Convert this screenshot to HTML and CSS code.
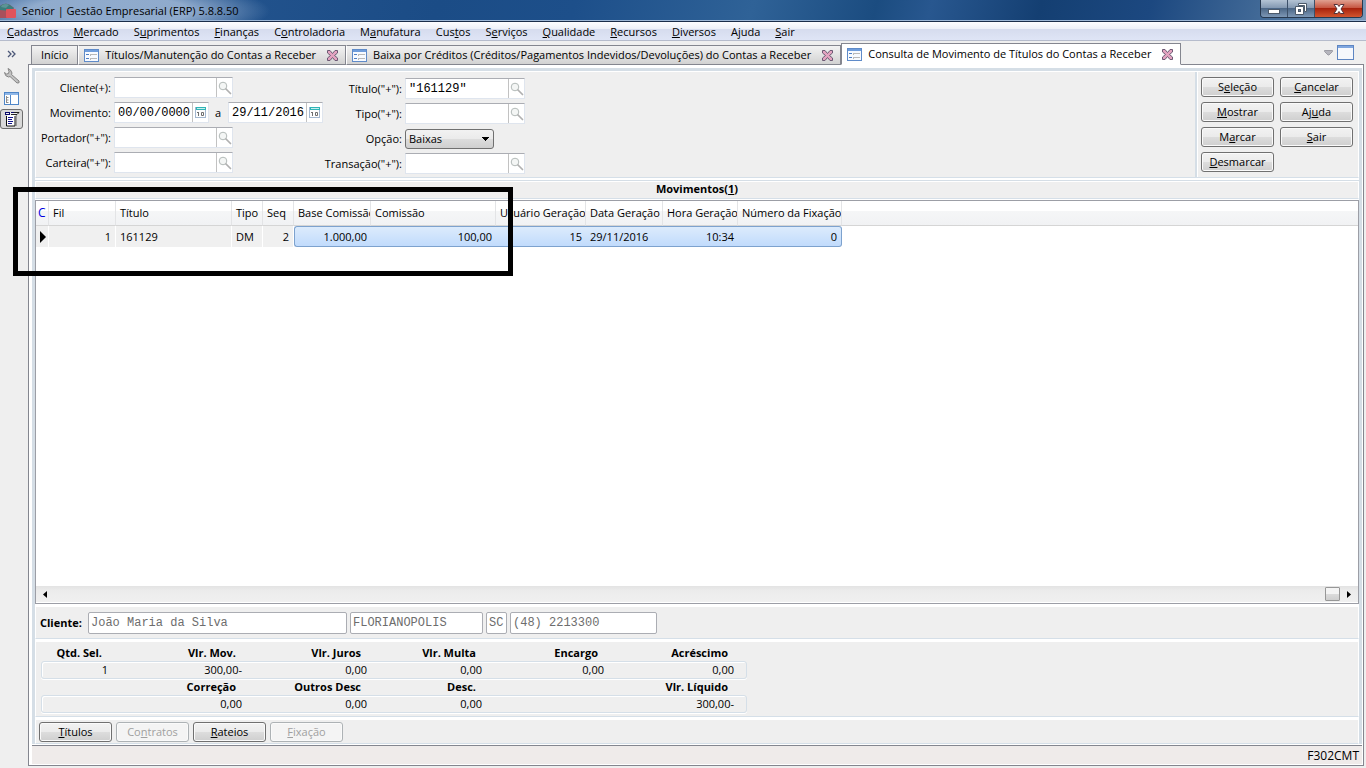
FILE: index.html
```
<!DOCTYPE html>
<html lang="pt-BR">
<head>
    <meta charset="UTF-8">
    <meta name="viewport" content="width=device-width, initial-scale=1.0">
    <title>Senior | Gestão Empresarial (ERP) 5.8.8.50</title>
    <link rel="stylesheet" href="styles.css">
</head>
<body>
    <!-- Ícones compartilhados -->
    <svg class="icon-defs" width="0" height="0" aria-hidden="true">
        <symbol id="icon-form" viewBox="0 0 15 13">
            <rect x="0.5" y="0.5" width="14" height="12" fill="#f7faff" stroke="#5f8bc9"/>
            <path d="M1 1h13v2H1z" fill="#6f9ddc"/>
            <path d="M2 5.500h3M2 9.500h3" stroke="#4f7fc4"/>
            <path d="M7 5.500h6M7 9.500h6M6.500 5v2M6.500 9v2" stroke="#b9b9b9"/>
        </symbol>
        <symbol id="icon-close" viewBox="0 0 11 11">
            <path d="M0.500 0.500h2.500l2.500 3 2.500-3h2.500v2.500l-3 2.500 3 2.500v2.500h-2.500l-2.500-3-2.500 3h-2.500v-2.500l3-2.500-3-2.500z" fill="#e3a3c0" stroke="#6d5a74"/>
        </symbol>
        <symbol id="icon-search" viewBox="0 0 14 14">
            <circle cx="5" cy="5" r="3.800" fill="#f4f6f5" stroke="#b3bab8"/>
            <path d="M8 8l4.500 4.500" stroke="#b0b0b0" stroke-width="1.700" stroke-linecap="round"/>
        </symbol>
        <symbol id="icon-calendar" viewBox="0 0 11 11">
            <rect x="0.5" y="0.5" width="10" height="10" fill="#fdfdfd" stroke="#a3b7cf"/>
            <path d="M1 0h10v3H1z" fill="#2fb4b6"/>
            <path d="M2 1h8v1H2z" fill="#c9f0ef"/>
            <path d="M3.500 5v4M2 5.500h1M6.500 5.500h2v3h-2z" fill="none" stroke="#6f6f6f"/>
        </symbol>
    </svg>

    <!-- Barra de título -->
    <header class="title-bar">
        <svg class="app-logo" width="16" height="16" viewBox="0 0 16 16" aria-hidden="true">
            <path d="M0 3q5-4 10-1l4 3-5 10H0z" fill="#a8505c"/>
            <path d="M0 3q5-4 10-1l4 3-4 3-10-1z" fill="#3c7d7c"/>
            <path d="M2 2q4-2 7 0l-3 3-5-1z" fill="#5c9495"/>
            <rect x="6" y="6" width="10" height="9" rx="1" fill="#e0535c"/>
        </svg>
        <h1 class="app-title">Senior | Gestão Empresarial (ERP) 5.8.8.50</h1>
        <div class="window-controls">
            <button type="button" class="win-btn" aria-label="Minimizar">
                <svg width="12" height="12" viewBox="0 0 12 12"><rect x="0.5" y="6.500" width="11" height="4" fill="#fff" stroke="#4c5a6b"/></svg>
            </button>
            <button type="button" class="win-btn" aria-label="Restaurar">
                <svg width="12" height="12" viewBox="0 0 12 12"><path d="M3.500 0.500h8v8h-2v-6h-6z" fill="#fff" stroke="#4c5a6b"/><path d="M0.500 3.500h8v8h-8z" fill="#fff" stroke="#4c5a6b"/><rect x="3.500" y="6.500" width="2" height="2" fill="#6d809a" stroke="#4c5a6b"/></svg>
            </button>
            <button type="button" class="win-btn win-close" aria-label="Fechar">
                <svg width="12" height="12" viewBox="0 0 12 12"><path d="M1 1.500h3.500l1.500 2 1.500-2H11L8 6l3 4.500H7.500L6 8.500l-1.500 2H1l3-4.500z" fill="#fff" stroke="#54333a"/></svg>
            </button>
        </div>
    </header>

    <!-- Menu principal -->
    <nav class="main-menu">
        <a href="#"><u>C</u>adastros</a>
        <a href="#"><u>M</u>ercado</a>
        <a href="#">S<u>u</u>primentos</a>
        <a href="#"><u>F</u>inanças</a>
        <a href="#">C<u>o</u>ntroladoria</a>
        <a href="#">M<u>a</u>nufatura</a>
        <a href="#">Cus<u>t</u>os</a>
        <a href="#">S<u>e</u>rviços</a>
        <a href="#"><u>Q</u>ualidade</a>
        <a href="#"><u>R</u>ecursos</a>
        <a href="#"><u>D</u>iversos</a>
        <a href="#">A<u>j</u>uda</a>
        <a href="#"><u>S</u>air</a>
    </nav>

    <div class="workspace">
        <!-- Barra lateral -->
        <aside class="side-bar">
            <button type="button" class="side-btn" aria-label="Expandir">
                <svg width="9" height="8" viewBox="0 0 9 8"><path d="M1 1l3 3-3 3M5 1l3 3-3 3" fill="none" stroke="#4c5878" stroke-width="1.300"/></svg>
            </button>
            <button type="button" class="side-btn" aria-label="Ferramentas">
                <svg width="16" height="16" viewBox="0 0 16 16"><path d="M4 0.500l2.500 1.500 1.500 3-.500 1.500L15 13q1 2.500-2 2L6 8.500 4.500 9Q1 8.500.500 4.500L2.500 6l2-.500.500-2z" fill="#c2c2c2" stroke="#858585"/></svg>
            </button>
            <button type="button" class="side-btn" aria-label="Árvore">
                <svg width="15" height="13" viewBox="0 0 15 13"><rect x="0.5" y="0.5" width="14" height="12" fill="#fff" stroke="#4f86c8"/><path d="M1 1h13v2H1z" fill="#8fb7e8"/><path d="M6.500 3v9" stroke="#4f86c8"/><path d="M2.500 4v7M2.500 5.500h2M2.500 8h2M2.500 10.500h2" stroke="#8d8d8d"/></svg>
            </button>
            <button type="button" class="side-btn pressed" aria-label="Formulário">
                <svg width="16" height="16" viewBox="0 0 16 16"><path d="M3 4h8v11H3z" fill="#fff"/><path d="M1 1h14l-2 3H1z" fill="#eee"/><path d="M2 1.500h3M2 3.500h3M7 1.500h3M1.500 1v3M5.500 1v3" stroke="#0b0b6b"/><path d="M10 1.500h5l-2 2H7" fill="none" stroke="#222"/><path d="M2.500 5v10h8.500V5" fill="none" stroke="#111"/><path d="M12.500 4v11" stroke="#999"/><path d="M4 6.500h5M4 8.500h4M4 10.500h5M4 12.500h4" stroke="#14148c"/></svg>
            </button>
        </aside>

        <div class="editor">
            <!-- Abas abertas -->
            <div class="tabs">
                <button type="button" class="tab">Início</button>
                <div class="tab">
                    <svg width="15" height="13"><use href="#icon-form"/></svg>
                    <button type="button" class="tab-label">Títulos/Manutenção do Contas a Receber</button>
                    <button type="button" class="tab-close" aria-label="Fechar aba"><svg width="11" height="11"><use href="#icon-close"/></svg></button>
                </div>
                <div class="tab">
                    <svg width="15" height="13"><use href="#icon-form"/></svg>
                    <button type="button" class="tab-label">Baixa por Créditos (Créditos/Pagamentos Indevidos/Devoluções) do Contas a Receber</button>
                    <button type="button" class="tab-close" aria-label="Fechar aba"><svg width="11" height="11"><use href="#icon-close"/></svg></button>
                </div>
                <div class="tab active">
                    <svg width="15" height="13"><use href="#icon-form"/></svg>
                    <button type="button" class="tab-label">Consulta de Movimento de Títulos do Contas a Receber</button>
                    <button type="button" class="tab-close" aria-label="Fechar aba"><svg width="11" height="11"><use href="#icon-close"/></svg></button>
                </div>
                <div class="tab-tools">
                    <button type="button" aria-label="Lista de abas"><svg width="9" height="6" viewBox="0 0 9 6"><path d="M0.500 0.500h8v1L5 5H4L0.500 1.500z" fill="#b5b5bd" stroke="#9d9da5"/></svg></button>
                    <button type="button" aria-label="Maximizar"><svg width="17" height="15" viewBox="0 0 17 15"><rect x="0.5" y="0.5" width="16" height="14" fill="#f6f8fc" stroke="#5e86c2"/><path d="M1 1h15v2H1z" fill="#7fa6df"/></svg></button>
                </div>
            </div>

            <div class="page">
                <div class="page-body">
                    <!-- Filtros -->
                    <section class="panel filters">
                        <form class="filter-form">
                            <div class="filter-grid">
                                <label for="cliente">Cliente(+):</label>
                                <div class="field"><input type="text" id="cliente"><button type="button" aria-label="Pesquisar"><svg width="14" height="14"><use href="#icon-search"/></svg></button></div>
                                <label for="movDe">Movimento:</label>
                                <div class="period">
                                    <div class="field date"><input type="text" id="movDe" value="00/00/0000"><button type="button" aria-label="Calendário"><svg width="11" height="11"><use href="#icon-calendar"/></svg></button></div>
                                    <label for="movAte">a</label>
                                    <div class="field date"><input type="text" id="movAte" value="29/11/2016"><button type="button" aria-label="Calendário"><svg width="11" height="11"><use href="#icon-calendar"/></svg></button></div>
                                </div>
                                <label for="portador">Portador("+"):</label>
                                <div class="field"><input type="text" id="portador"><button type="button" aria-label="Pesquisar"><svg width="14" height="14"><use href="#icon-search"/></svg></button></div>
                                <label for="carteira">Carteira("+"):</label>
                                <div class="field"><input type="text" id="carteira"><button type="button" aria-label="Pesquisar"><svg width="14" height="14"><use href="#icon-search"/></svg></button></div>
                            </div>
                            <div class="filter-grid second">
                                <label for="titulo">Título("+"):</label>
                                <div class="field"><input type="text" id="titulo" value="&quot;161129&quot;"><button type="button" aria-label="Pesquisar"><svg width="14" height="14"><use href="#icon-search"/></svg></button></div>
                                <label for="tipo">Tipo("+"):</label>
                                <div class="field"><input type="text" id="tipo"><button type="button" aria-label="Pesquisar"><svg width="14" height="14"><use href="#icon-search"/></svg></button></div>
                                <label for="opcao">Opção:</label>
                                <select id="opcao"><option>Baixas</option></select>
                                <label for="transacao">Transação("+"):</label>
                                <div class="field"><input type="text" id="transacao"><button type="button" aria-label="Pesquisar"><svg width="14" height="14"><use href="#icon-search"/></svg></button></div>
                            </div>
                        </form>
                        <div class="actions">
                            <button type="button" class="btn">S<u>e</u>leção</button>
                            <button type="button" class="btn"><u>C</u>ancelar</button>
                            <button type="button" class="btn"><u>M</u>ostrar</button>
                            <button type="button" class="btn">Aj<u>u</u>da</button>
                            <button type="button" class="btn">M<u>a</u>rcar</button>
                            <button type="button" class="btn"><u>S</u>air</button>
                            <button type="button" class="btn"><u>D</u>esmarcar</button>
                        </div>
                    </section>

                    <!-- Movimentos -->
                    <section class="movements">
                        <h2 class="panel movements-title">Movimentos(<u>1</u>)</h2>
                        <div class="grid-box">
                            <div class="grid-scroll">
                                <table class="grid">
                                    <colgroup>
                                        <col class="w-mark"><col class="w-fil"><col class="w-titulo"><col class="w-short"><col class="w-short"><col class="w-base"><col class="w-comissao"><col class="w-usuario"><col class="w-data"><col class="w-hora"><col class="w-numero"><col>
                                    </colgroup>
                                    <thead>
                                        <tr>
                                            <th class="mark">C</th>
                                            <th>Fil</th>
                                            <th>Título</th>
                                            <th>Tipo</th>
                                            <th>Seq</th>
                                            <th>Base Comissão</th>
                                            <th>Comissão</th>
                                            <th>Usuário Geração</th>
                                            <th>Data Geração</th>
                                            <th>Hora Geração</th>
                                            <th>Número da Fixação</th>
                                            <th></th>
                                        </tr>
                                    </thead>
                                    <tbody>
                                        <tr>
                                            <td class="pointer"><svg width="6" height="12" viewBox="0 0 6 12"><path d="M0 0l6 6-6 6z"/></svg></td>
                                            <td class="num">1</td>
                                            <td>161129</td>
                                            <td>DM</td>
                                            <td class="num">2</td>
                                            <td class="num sel first">1.000,00</td>
                                            <td class="num sel">100,00</td>
                                            <td class="num sel">15</td>
                                            <td class="sel">29/11/2016</td>
                                            <td class="num sel">10:34</td>
                                            <td class="num sel last">0</td>
                                            <td class="empty"></td>
                                        </tr>
                                    </tbody>
                                </table>
                            </div>
                            <div class="scroll-bar">
                                <button type="button" aria-label="Rolar para a esquerda"><svg width="4" height="7" viewBox="0 0 4 7"><path d="M4 0v7L0 3.500z"/></svg></button>
                                <span class="scroll-thumb"></span>
                                <button type="button" aria-label="Rolar para a direita"><svg width="4" height="7" viewBox="0 0 4 7"><path d="M0 0v7l4-3.500z"/></svg></button>
                            </div>
                        </div>
                        <div class="highlight"></div>
                    </section>

                    <!-- Dados do cliente -->
                    <section class="panel client">
                        <label for="nome">Cliente:</label>
                        <input type="text" id="nome" class="client-name" value="João Maria da Silva" readonly>
                        <input type="text" class="client-city" value="FLORIANOPOLIS" aria-label="Cidade" readonly>
                        <input type="text" class="client-state" value="SC" aria-label="Estado" readonly>
                        <input type="text" class="client-phone" value="(48) 2213300" aria-label="Telefone" readonly>
                    </section>

                    <!-- Totais -->
                    <section class="panel totals">
                        <div class="totals-row heads">
                            <span>Qtd. Sel.</span><span>Vlr. Mov.</span><span>Vlr. Juros</span><span>Vlr. Multa</span><span>Encargo</span><span>Acréscimo</span>
                        </div>
                        <div class="totals-row values">
                            <span>1</span><span>300,00-</span><span>0,00</span><span>0,00</span><span>0,00</span><span>0,00</span>
                        </div>
                        <div class="totals-row heads">
                            <span></span><span>Correção</span><span>Outros Desc</span><span>Desc.</span><span></span><span>Vlr. Líquido</span>
                        </div>
                        <div class="totals-row values">
                            <span></span><span>0,00</span><span>0,00</span><span>0,00</span><span></span><span>300,00-</span>
                        </div>
                    </section>

                    <section class="panel footer-actions">
                        <button type="button" class="btn"><u>T</u>ítulos</button>
                        <button type="button" class="btn" disabled>Co<u>n</u>tratos</button>
                        <button type="button" class="btn"><u>R</u>ateios</button>
                        <button type="button" class="btn" disabled><u>F</u>ixação</button>
                    </section>
                </div>
                <footer class="status-bar">F302CMT</footer>
            </div>
        </div>
    </div>
</body>
</html>
```

FILE: styles.css
```
* {
    margin: 0;
    padding: 0;
    box-sizing: border-box;
}

body {
    display: flex;
    flex-direction: column;
    height: 100vh;
    overflow: hidden;
    background-color: #efefef;
    color: #000;
    font-family: "Open Sans", "Noto Sans", sans-serif;
    font-size: 11px;
    line-height: 16px;
}

button,
input,
select {
    font: inherit;
    color: inherit;
}

button {
    background: none;
    border: none;
}

svg {
    display: block;
    flex: none;
}

u {
    text-underline-offset: 1px;
}

.icon-defs {
    position: absolute;
}

/* Barra de título */
.title-bar {
    display: flex;
    align-items: flex-start;
    height: 22px;
    border-bottom: 1px solid #1b2d4a;
    box-shadow: inset 0 -1px 0 #9db7d6;
    background:
        radial-gradient(ellipse 160px 30px at 110px 11px, rgba(170, 192, 220, 0.8) 50%, rgba(170, 192, 220, 0) 100%),
        linear-gradient(105deg, #2a5a94 0%, #1b4c86 32%, #1d4f8a 42%, #2f6297 55%, #1b4c80 64%, #28578f 68%, #143f72 76%, #1c4880 84%, #4a719c 94%, #7c9abb 100%);
}

.app-logo {
    margin-top: 3px;
}

.app-title {
    flex: 1;
    padding-left: 6px;
    font-size: 11px;
    font-weight: normal;
    line-height: 22px;
}

.window-controls {
    display: flex;
    height: 18px;
    margin-right: 3px;
    border: 1px solid #26384f;
    border-top: none;
    border-radius: 0 0 4px 4px;
    overflow: hidden;
}

.win-btn {
    display: flex;
    align-items: center;
    justify-content: center;
    width: 27px;
    border-right: 1px solid #3c5069;
    background: linear-gradient(#b4c3d4 0%, #8499b2 45%, #4c6787 50%, #7d97b5 100%);
}

.win-close {
    width: 47px;
    border-right: none;
    background: linear-gradient(#e0a090 0%, #c75843 45%, #a8230d 50%, #d2552f 100%);
}

/* Menu principal */
.main-menu {
    display: flex;
    gap: 15px;
    height: 19px;
    padding-left: 7px;
    border-bottom: 1px solid #b6bccc;
    background: linear-gradient(#fdfdff 0%, #edf0f8 38%, #d6dcee 40%, #dfe5f6 100%);
    line-height: 19px;
}

.main-menu a {
    color: inherit;
    text-decoration: none;
}

.workspace {
    display: flex;
    flex: 1;
    min-height: 0;
    padding: 2px 2px 2px 0;
}

/* Barra lateral */
.side-bar {
    display: flex;
    flex-direction: column;
    align-items: flex-start;
    width: 28px;
}

.side-btn {
    display: flex;
    align-items: center;
    justify-content: center;
    width: 23px;
    height: 22px;
}

.side-btn.pressed {
    height: 20px;
    border: 1px solid #6d6d6d;
    border-radius: 3px;
    background-color: #d9d9d9;
}

.editor {
    display: flex;
    flex: 1;
    flex-direction: column;
    min-width: 0;
}

/* Abas */
.tabs {
    display: flex;
    align-items: flex-end;
    height: 22px;
    padding-left: 3px;
    box-shadow: inset 0 -1px 0 #84868f;
}

.tab {
    display: flex;
    align-items: center;
    height: 20px;
    padding: 0 7px 0 5px;
    border: 1px solid #84868f;
    border-left-color: #fff;
    background: linear-gradient(#f3f3f3, #d2d2d2);
    white-space: nowrap;
}

button.tab {
    padding: 0 9px;
    border-left-color: #84868f;
}

.tab.active {
    height: 22px;
    border-left-color: #84868f;
    border-bottom-color: #fff;
    background: #fff;
}

.tab-label {
    padding: 0 11px 0 6px;
}

.tab-tools {
    display: flex;
    align-items: center;
    gap: 4px;
    height: 22px;
    margin-left: auto;
    padding: 0 10px 3px 0;
}

/* Página */
.page {
    display: flex;
    flex: 1;
    flex-direction: column;
    min-height: 0;
    padding: 3px 1px 0 3px;
    border: 1px solid #84868f;
    border-top: none;
    background-color: #fff;
}

.page-body {
    display: flex;
    flex: 1;
    flex-direction: column;
    min-height: 0;
    border: 3px solid #d5dee6;
    border-bottom: none;
}

.panel {
    border: 1px solid #fff;
    border-bottom: 1px solid #d5dfe8;
    background-color: #efefef;
}

.filters {
    display: flex;
    height: 107px;
}

.filter-form {
    display: flex;
    flex: 1;
    padding: 5px 0 0;
}

.filter-grid {
    display: grid;
    grid-template-columns: 75px auto;
    grid-auto-rows: 21px;
    gap: 4px 3px;
    align-content: start;
    align-items: center;
}

.filter-grid.second {
    grid-template-columns: 79px auto;
    padding-top: 1px;
}

.filter-grid.second .field {
    width: 120px;
}

.filter-grid > label {
    text-align: right;
    white-space: nowrap;
}

.field {
    display: flex;
    width: 119px;
    height: 21px;
    border: 1px solid #dfe5ee;
    border-top-color: #abadb3;
    background-color: #fff;
}

.field input {
    flex: 1;
    min-width: 0;
    padding-left: 3px;
    border: none;
    font-family: "Liberation Mono", monospace;
    font-size: 12px;
}

.field button {
    display: flex;
    align-items: center;
    justify-content: center;
    width: 16px;
    border-left: 1px solid #c2c2c2;
}

.field.date {
    width: 95px;
}

.period {
    display: flex;
    gap: 6px;
}

.period label {
    width: 7px;
    line-height: 21px;
}

select {
    appearance: none;
    width: 89px;
    height: 20px;
    padding: 0 3px;
    border: 1px solid #707070;
    border-radius: 3px;
    background:
        linear-gradient(to bottom left, #000 50%, transparent 50%) right 7px center / 4px 4px no-repeat,
        linear-gradient(to bottom right, #000 50%, transparent 50%) right 3px center / 4px 4px no-repeat,
        linear-gradient(#f2f2f2 0%, #ebebeb 48%, #dddddd 50%, #cfcfcf 100%);
}

.actions {
    display: grid;
    grid-template-columns: 73px 73px;
    grid-auto-rows: 20px;
    gap: 5px 6px;
    padding: 5px 5px 0 4px;
    border-left: 2px solid #d5dee6;
    box-shadow: inset 1px 0 0 #fff;
}

.btn {
    width: 73px;
    height: 20px;
    border: 1px solid #707070;
    border-radius: 3px;
    background: linear-gradient(#f2f2f2 0%, #ebebeb 48%, #dddddd 50%, #cfcfcf 100%);
    box-shadow: inset 0 0 0 1px #fafafa;
    line-height: 18px;
}

.btn:disabled {
    border-color: #adb2b5;
    background: #f4f4f4;
    color: #a0a0a0;
}

/* Movimentos */
.movements {
    position: relative;
    display: flex;
    flex: 1;
    flex-direction: column;
    min-height: 0;
    margin-top: 2px;
    border-top: 1px solid #d5dee6;
}

.movements-title {
    height: 18px;
    margin-bottom: 1px;
    font-size: 11px;
    font-weight: bold;
    line-height: 14px;
    text-align: center;
}

.grid-box {
    display: flex;
    flex: 1;
    flex-direction: column;
    min-height: 0;
    border: 1px solid #9c9ea6;
    background-color: #fff;
}

.grid-scroll {
    flex: 1;
    min-height: 0;
    overflow: hidden;
}

.grid {
    width: 100%;
    border-collapse: separate;
    border-spacing: 0;
    table-layout: fixed;
}

.w-mark { width: 13px; }
.w-fil { width: 67px; }
.w-titulo { width: 116px; }
.w-short { width: 31px; }
.w-base { width: 77px; }
.w-comissao { width: 125px; }
.w-usuario { width: 90px; }
.w-data { width: 77px; }
.w-hora { width: 75px; }
.w-numero { width: 104px; }

.grid th {
    height: 25px;
    padding-left: 4px;
    border-right: 1px solid #e3e4e6;
    border-bottom: 1px solid #d5d5d5;
    background: linear-gradient(#fff 40%, #f5f6f7 42%, #f1f2f4 100%);
    font-weight: normal;
    text-align: left;
    white-space: nowrap;
    overflow: hidden;
}

.grid th:last-child {
    border-right: none;
}

.grid th.mark {
    padding-left: 2px;
    color: #0000e0;
    font-size: 12px;
}

.grid td {
    height: 21px;
    padding: 0 4px;
    border-right: 1px solid #fff;
    background-color: #f0f0f0;
    white-space: nowrap;
}

.grid td.num {
    text-align: right;
}

.grid td.empty {
    background: none;
}

.grid td.sel {
    border: solid #7da2ce;
    border-width: 1px 0;
    background: linear-gradient(#dcebfc, #c1dbfc);
}

.grid td.first {
    border-left-width: 1px;
    border-radius: 3px 0 0 3px;
}

.grid td.last {
    border-right-width: 1px;
    border-radius: 0 3px 3px 0;
}

.scroll-bar {
    display: flex;
    align-items: center;
    height: 16px;
    margin-bottom: 1px;
    background: linear-gradient(#e3e3e3, #ececec 30%, #f0f0f0);
}

.scroll-bar button {
    display: flex;
    align-items: center;
    justify-content: center;
    width: 18px;
    height: 16px;
}

.scroll-thumb {
    width: 15px;
    height: 14px;
    margin-left: auto;
    border: 1px solid #979797;
    border-radius: 1px;
    background: linear-gradient(#f4f4f4 48%, #dcdcdc 50%, #cfcfcf);
}

/* Marcação em destaque sobre a grade */
.highlight {
    position: absolute;
    top: 6px;
    left: -22px;
    width: 500px;
    height: 89px;
    border: 5px solid #000;
    pointer-events: none;
}

/* Cliente */
.client {
    display: flex;
    align-items: center;
    gap: 3px;
    height: 33px;
    margin-top: 2px;
    padding-left: 4px;
}

.client label {
    width: 45px;
    font-weight: bold;
}

.client input {
    height: 22px;
    padding-left: 2px;
    border: 1px solid #abadb3;
    border-radius: 2px;
    background-color: #fff;
    color: #6d6d6d;
    font-family: "Liberation Mono", monospace;
    font-size: 12px;
}

.client .client-name { width: 259px; }
.client .client-city { width: 133px; }
.client .client-state { width: 21px; }
.client .client-phone { width: 147px; }

/* Totais */
.totals {
    height: 76px;
    margin-top: 2px;
    padding: 3px 0 0 5px;
}

.totals-row {
    display: grid;
    grid-template-columns: 66px 134px 125px 115px 122px 130px;
    width: 706px;
    text-align: right;
}

.totals-row.heads {
    font-weight: bold;
}

.totals-row.heads span {
    padding-right: 5px;
}

.totals-row.values {
    height: 18px;
    border: 1px solid #d5dfe8;
    border-radius: 3px;
    box-shadow: 0 1px 0 #fff, inset 1px 1px 0 #fff;
}

.footer-actions {
    display: flex;
    align-items: center;
    gap: 4px;
    height: 25px;
    margin-top: 2px;
    padding-left: 3px;
}

.status-bar {
    height: 20px;
    margin-top: 1px;
    padding-right: 3px;
    border-top: 1px solid #84868f;
    border-bottom: 1px solid #fff;
    background-color: #efebea;
    font-size: 12px;
    line-height: 19px;
    text-align: right;
}
```
